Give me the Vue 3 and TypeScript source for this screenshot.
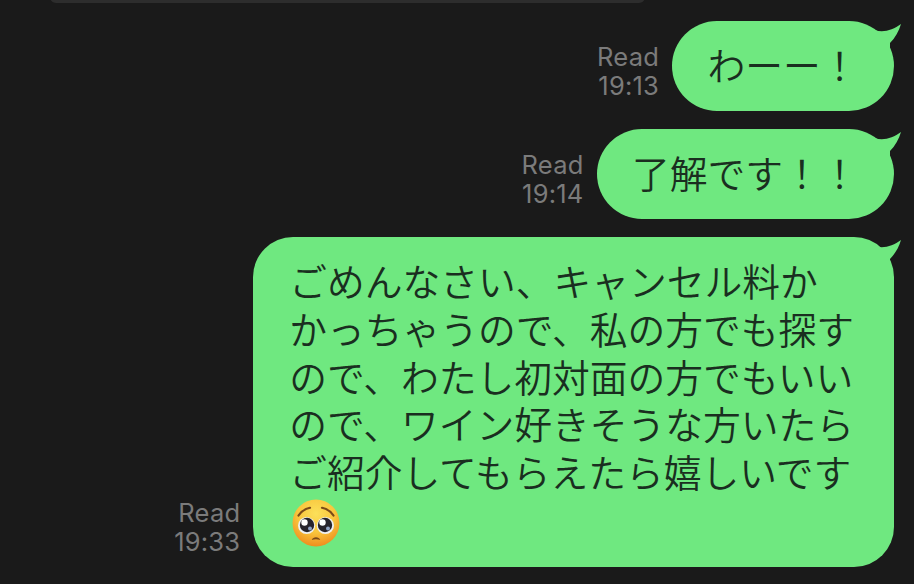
<script setup lang="ts">
interface Message {
  id: number
  time: string
  lines: string[]
  emoji?: boolean
}

const messages: Message[] = [
  { id: 1, time: '19:13', lines: ['わーー！'] },
  { id: 2, time: '19:14', lines: ['了解です！！'] },
  {
    id: 3,
    time: '19:33',
    lines: [
      'ごめんなさい、キャンセル料か',
      'かっちゃうので、私の方でも探す',
      'ので、わたし初対面の方でもいい',
      'ので、ワイン好きそうな方いたら',
      'ご紹介してもらえたら嬉しいです',
    ],
    emoji: true,
  },
]
</script>

<template>
  <main class="chat">
    <div class="prev-card"></div>
    <div v-for="m in messages" :key="m.id" class="row">
      <div class="meta">
        <span>Read</span>
        <span>{{ m.time }}</span>
      </div>
      <div class="bubble" :class="{ long: m.emoji }">
        <svg class="tail" width="40" height="30" viewBox="0 0 40 30" aria-hidden="true">
          <path d="M14 9 C22 12 32 9 40 3 C38 10 34 17 29 22 L29 28 L14 28 Z" fill="#6fe880" />
        </svg>
        <p v-for="line in m.lines" :key="line" class="line">{{ line }}</p>
        <svg v-if="m.emoji" class="emoji" width="48" height="48" viewBox="0 0 48 48" aria-hidden="true">
          <defs>
            <radialGradient id="face" cx="50%" cy="30%" r="72%">
              <stop offset="0" stop-color="#fbe05a" />
              <stop offset="0.55" stop-color="#f9c53c" />
              <stop offset="1" stop-color="#ee8a1c" />
            </radialGradient>
          </defs>
          <circle cx="24" cy="24" r="23.5" fill="url(#face)" />
          <path d="M6.5 16.5 C9 12.5 13 10 18 8.8" fill="none" stroke="#7a4a18" stroke-width="2.2" stroke-linecap="round" />
          <path d="M41.5 16.5 C39 12.5 35 10 30 8.8" fill="none" stroke="#7a4a18" stroke-width="2.2" stroke-linecap="round" />
          <circle cx="14.6" cy="26.5" r="8.6" fill="#eef0f2" />
          <circle cx="33.4" cy="26.5" r="8.6" fill="#eef0f2" />
          <circle cx="15" cy="26" r="7.2" fill="#26232b" />
          <circle cx="33" cy="26" r="7.2" fill="#26232b" />
          <circle cx="12.5" cy="23.5" r="3.2" fill="#fff" />
          <circle cx="30.5" cy="23.5" r="3.2" fill="#fff" />
          <circle cx="18" cy="29.5" r="2" fill="#8fa3c4" />
          <circle cx="36" cy="29.5" r="2" fill="#8fa3c4" />
          <path d="M19.8 41 C20.8 37.2 27.2 37.2 28.2 41 C26 39.9 22 39.9 19.8 41 Z" fill="#7a4a18" />
        </svg>
      </div>
    </div>
  </main>
</template>

<style>
html,
body {
  margin: 0;
  background: #1a1a1a;
}
</style>

<style scoped>
.chat {
  position: relative;
  box-sizing: border-box;
  width: 914px;
  height: 584px;
  overflow: hidden;
  padding: 21px 20px 0 0;
  display: flex;
  flex-direction: column;
  align-items: flex-end;
  gap: 18px;
  background: #1a1a1a;
}

.prev-card {
  position: absolute;
  left: 50px;
  top: -10px;
  width: 595px;
  height: 13px;
  border-radius: 6px;
  background: #2d2d2d;
}

.row {
  display: flex;
  align-items: flex-end;
  gap: 13px;
}

.meta {
  display: flex;
  flex-direction: column;
  align-items: flex-end;
  padding-bottom: 11px;
  font-family: Inter, "Liberation Sans", sans-serif;
  font-size: 25.5px;
  letter-spacing: 0.2px;
  line-height: 29px;
  color: #7b7b7b;
}

.bubble {
  position: relative;
  padding: 19.1px 35.5px 23.1px;
  border-radius: 45px;
  background: #6fe880;
  color: #1a2e20;
  font-family: "Noto Sans CJK JP", "Noto Sans", sans-serif;
  font-size: 37.75px;
  line-height: 47.8px;
  font-weight: 350;
}

.bubble.long {
  padding-left: 36px;
  padding-right: 40px;
  padding-bottom: 20.4px;
  border-radius: 40px;
}

.line {
  margin: 0;
  white-space: nowrap;
}

.tail {
  position: absolute;
  top: 0;
  right: -7px;
  pointer-events: none;
}

.emoji {
  display: block;
  margin: 3.5px 0 0 3px;
}
</style>
